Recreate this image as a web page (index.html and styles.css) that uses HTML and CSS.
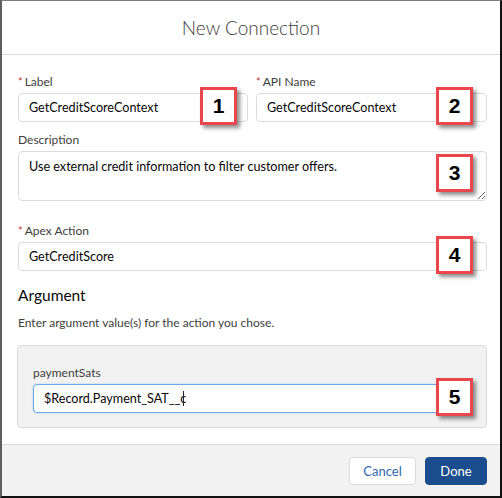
FILE: index.html
```html
<!DOCTYPE html>
<html lang="en">
<head>
  <meta charset="UTF-8">
  <meta name="viewport" content="width=device-width, initial-scale=1.0">
  <title>New Connection</title>
  <link rel="stylesheet" href="styles.css">
</head>
<body>
  <div class="modal">
    <header class="modal-header">New Connection</header>

    <div class="modal-body">
      <div class="row">
        <div class="field">
          <label class="field-label"><abbr>*</abbr>Label</label>
          <div class="control">
            <div class="input">GetCreditScoreContext</div>
            <span class="callout callout-1">1</span>
          </div>
        </div>
        <div class="field">
          <label class="field-label"><abbr>*</abbr>API Name</label>
          <div class="control">
            <div class="input">GetCreditScoreContext</div>
            <span class="callout">2</span>
          </div>
        </div>
      </div>

      <div class="field field-desc">
        <label class="field-label">Description</label>
        <div class="control">
          <textarea class="textarea">Use external credit information to filter customer offers.</textarea>
          <span class="callout callout-low">3</span>
        </div>
      </div>

      <div class="field field-action">
        <label class="field-label"><abbr>*</abbr>Apex Action</label>
        <div class="control">
          <div class="input">GetCreditScore</div>
          <span class="callout">4</span>
        </div>
      </div>

      <h2 class="section-title">Argument</h2>
      <p class="help">Enter argument value(s) for the action you chose.</p>

      <div class="arg-box">
        <div class="field">
          <label class="field-label">paymentSats</label>
          <div class="control">
            <div class="input input-focus">$Record.Payment_SAT__c<span class="caret"></span></div>
            <span class="callout callout-edge">5</span>
          </div>
        </div>
      </div>
    </div>

    <footer class="modal-footer">
      <button class="btn btn-neutral">Cancel</button>
      <button class="btn btn-brand">Done</button>
    </footer>
  </div>
</body>
</html>
```

FILE: styles.css
```css
body {
  margin: 0;
  font-family: Lato, "Open Sans", sans-serif;
  color: #080707;
}
.modal {
  width: 502px;
  height: 498px;
  box-sizing: border-box;
  border-top: 1px solid #7a7a7a;
  border-left: 2px solid #5f5f5f;
  border-right: 2px solid #111;
  border-bottom: 2px solid #111;
  display: flex;
  flex-direction: column;
  background: #fff;
}
.modal-header {
  height: 53px;
  border-bottom: 1px solid #dddbda;
  display: flex;
  align-items: center;
  justify-content: center;
  font-size: 19px;
  font-weight: 300;
  color: #3e3e3c;
}
.modal-body {
  flex: 1;
  padding: 18px 13px 0 16px;
}
.row {
  display: grid;
  grid-template-columns: 230px 231px;
  gap: 8px;
}
.field-label {
  display: block;
  font-size: 12px;
  line-height: 18px;
  color: #3e3e3c;
  margin-bottom: 2px;
}
.field-label abbr {
  color: #c23934;
  margin-right: 2px;
  font-size: 11px;
}
.control {
  position: relative;
}
.input {
  height: 29px;
  box-sizing: border-box;
  border: 1px solid #dddbda;
  border-radius: 4px;
  padding: 0 10px;
  font-size: 12.6px;
  line-height: 27px;
  background: #fff;
}
.input-focus {
  border-color: #6aaae6;
  box-shadow: 0 0 2px #9fcaf0;
}
.caret {
  display: inline-block;
  width: 1px;
  height: 15px;
  background: #222;
  vertical-align: -3px;
  margin-left: -3px;
}
.field-desc {
  margin-top: 9px;
}
.textarea {
  display: block;
  width: 100%;
  height: 50px;
  box-sizing: border-box;
  border: 1px solid #dddbda;
  border-radius: 4px;
  padding: 7px 10px;
  font-family: inherit;
  font-size: 12.6px;
  color: #080707;
  resize: vertical;
}
.field-action {
  margin-top: 21px;
}
.section-title {
  margin: 14px 0 0;
  font-size: 15.5px;
  font-weight: 400;
  line-height: 20px;
  color: #080707;
}
.help {
  margin: 9px 0 0;
  font-size: 12px;
  line-height: 18px;
  color: #3e3e3c;
}
.arg-box {
  margin: 13px 0 0 -1px;
  background: #f3f2f2;
  border: 1px solid #dddbda;
  border-radius: 4px;
  padding: 18px 15px 14px;
}

/* numbered markers laid over the fields */
.callout {
  position: absolute;
  top: -6px;
  right: 14px;
  width: 31px;
  height: 32px;
  border: 3px solid #e9474b;
  background: #fff;
  box-shadow: 3px 3px 4px rgba(0, 0, 0, 0.45);
  display: flex;
  align-items: center;
  justify-content: center;
  font-family: "Liberation Sans", Arial, sans-serif;
  font-weight: 700;
  font-size: 21px;
  color: #000;
}
.callout-1 {
  right: 11px;
}
.callout-low {
  top: 3px;
}
.callout-edge {
  right: -2px;
}

.modal-footer {
  height: 51px;
  border-top: 1px solid #dddbda;
  background: #f3f2f2;
  display: flex;
  align-items: center;
  justify-content: flex-end;
  gap: 9px;
  padding: 0 13px 0 0;
}
.btn {
  height: 28px;
  border-radius: 4px;
  font-family: inherit;
  font-size: 13px;
  padding: 0;
}
.btn-neutral {
  width: 67px;
  background: #fff;
  border: 1px solid #dddbda;
  color: #2f67b1;
}
.btn-brand {
  width: 62px;
  background: #1b4e8f;
  border: 1px solid #1b4e8f;
  color: #fff;
}
```
